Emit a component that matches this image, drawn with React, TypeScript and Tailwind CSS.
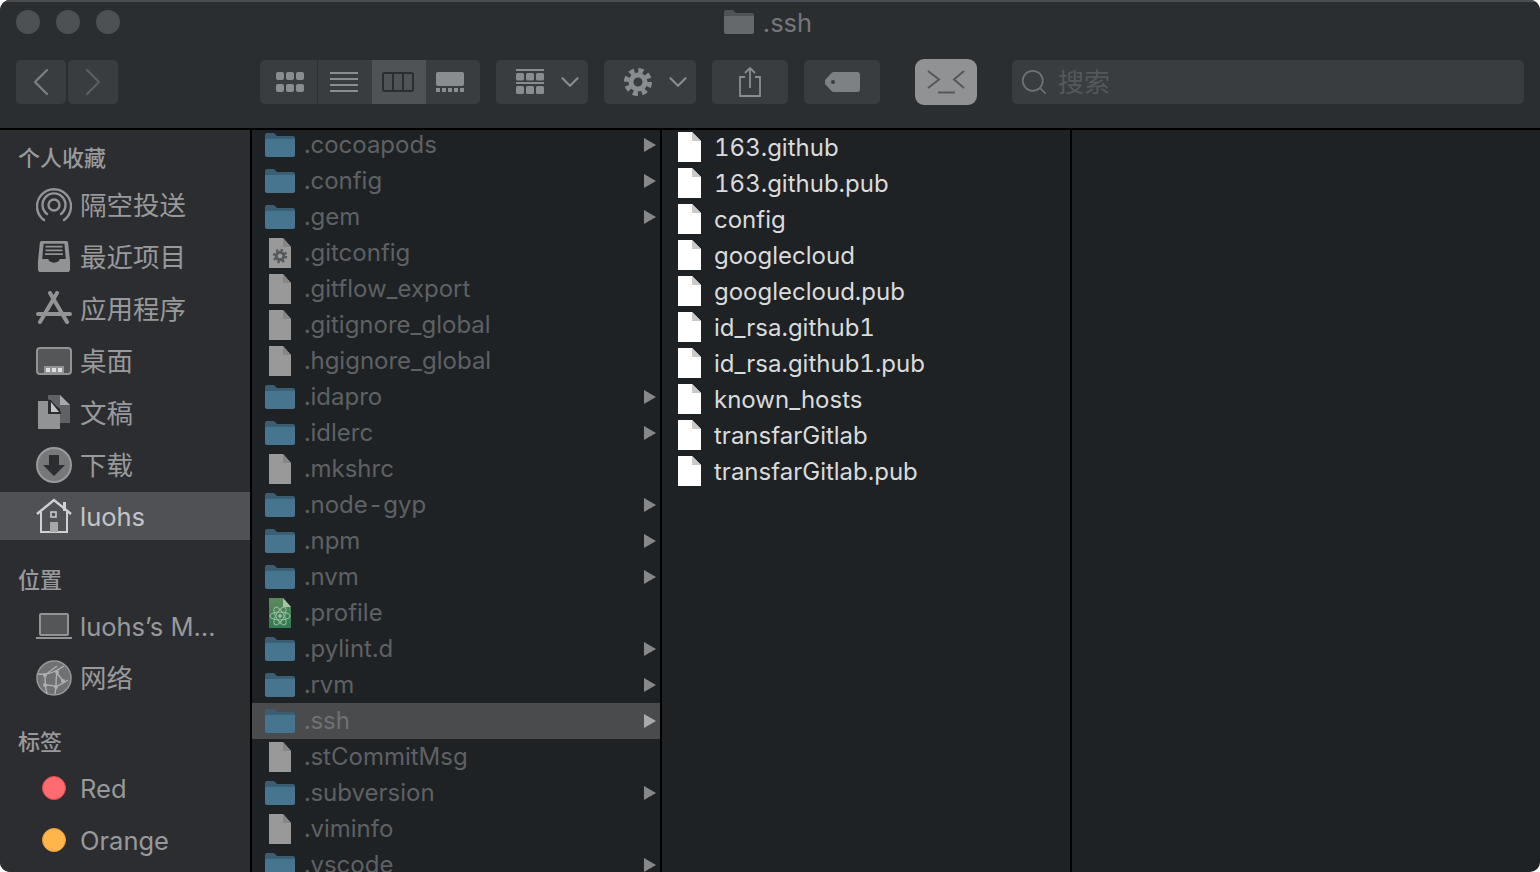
import type { ReactNode } from 'react'
import { ChevronLeft, ChevronRight, ChevronDown, Search } from 'lucide-react'

const FONT = 'font-["Inter","Noto_Sans_CJK_SC",sans-serif]'

type IconKind = 'folder' | 'file' | 'gear' | 'atom'

const dotfiles: { name: string; icon: IconKind; arrow?: boolean }[] = [
  { name: '.cocoapods', icon: 'folder', arrow: true },
  { name: '.config', icon: 'folder', arrow: true },
  { name: '.gem', icon: 'folder', arrow: true },
  { name: '.gitconfig', icon: 'gear' },
  { name: '.gitflow_export', icon: 'file' },
  { name: '.gitignore_global', icon: 'file' },
  { name: '.hgignore_global', icon: 'file' },
  { name: '.idapro', icon: 'folder', arrow: true },
  { name: '.idlerc', icon: 'folder', arrow: true },
  { name: '.mkshrc', icon: 'file' },
  { name: '.node-gyp', icon: 'folder', arrow: true },
  { name: '.npm', icon: 'folder', arrow: true },
  { name: '.nvm', icon: 'folder', arrow: true },
  { name: '.profile', icon: 'atom' },
  { name: '.pylint.d', icon: 'folder', arrow: true },
  { name: '.rvm', icon: 'folder', arrow: true },
  { name: '.ssh', icon: 'folder', arrow: true },
  { name: '.stCommitMsg', icon: 'file' },
  { name: '.subversion', icon: 'folder', arrow: true },
  { name: '.viminfo', icon: 'file' },
  { name: '.vscode', icon: 'folder', arrow: true },
]

const sshFiles = [
  '163.github',
  '163.github.pub',
  'config',
  'googlecloud',
  'googlecloud.pub',
  'id_rsa.github1',
  'id_rsa.github1.pub',
  'known_hosts',
  'transfarGitlab',
  'transfarGitlab.pub',
]

const FILE_PATH = 'M1 0H15L23 9V30H1Z'

function FolderIcon() {
  return (
    <svg width="30" height="24" viewBox="0 0 30 24">
      <path d="M0 2a2 2 0 0 1 2-2h7l3 3h16a2 2 0 0 1 2 2v3H0Z" fill="#3a5f74" />
      <path d="M0 6h30v16a2 2 0 0 1-2 2H2a2 2 0 0 1-2-2Z" fill="#47748f" />
    </svg>
  )
}

function DotfileIcon({ kind }: { kind: IconKind }) {
  if (kind === 'folder') return <FolderIcon />
  return (
    <svg width="30" height="30" viewBox="-3 0 30 30">
      <defs>
        <linearGradient id="atomfill" x1="0" y1="0" x2="0" y2="1">
          <stop offset="0" stopColor="#5d8a5c" />
          <stop offset="1" stopColor="#2f7a52" />
        </linearGradient>
      </defs>
      <path d={FILE_PATH} fill={kind === 'atom' ? 'url(#atomfill)' : '#999999'} />
      <path d="M15 0L23 9H15Z" fill={kind === 'atom' ? '#a9c2a4' : '#868686'} />
      {kind === 'gear' && (
        <g fill="none" stroke="#55595d">
          <circle cx="12" cy="18" r="3.800" strokeWidth="3" />
          <circle cx="12" cy="18" r="6" strokeWidth="2.500" strokeDasharray="2.300 2.400" />
        </g>
      )}
      {kind === 'atom' && (
        <g fill="none" stroke="#9dbfa5" strokeWidth="1">
          <ellipse cx="12" cy="18" rx="10" ry="4" />
          <ellipse cx="12" cy="18" rx="10" ry="4" transform="rotate(60 12 18)" />
          <ellipse cx="12" cy="18" rx="10" ry="4" transform="rotate(120 12 18)" />
          <circle cx="12" cy="18" r="1.400" fill="#9dbfa5" />
        </g>
      )}
    </svg>
  )
}

function ToolButton({ className = '', children }: { className?: string; children: ReactNode }) {
  return (
    <div className={`h-11 flex items-center justify-center rounded-[5px] bg-[#3a3d40] ${className}`}>
      {children}
    </div>
  )
}

function SidebarHeader({ label, className = '' }: { label: string; className?: string }) {
  return (
    <div className={`h-7 pl-[18px] flex items-center text-[22px] font-medium text-[#98999b] ${className}`}>
      {label}
    </div>
  )
}

function SidebarRow({ icon, label, active, latin }: { icon: ReactNode; label: string; active?: boolean; latin?: boolean }) {
  return (
    <div
      className={`${active ? 'h-12 mt-px mb-[3px] bg-[#505154] text-[#c4c5c7]' : 'h-[52px] text-[#98999b]'} ${latin ? 'text-[25.500px]' : 'text-[26.500px]'} flex items-center whitespace-nowrap`}
    >
      <div className="w-[36px] ml-[36px] mr-2 flex justify-center">{icon}</div>
      <span className="pt-0.5">{label}</span>
    </div>
  )
}

const airdrop = (
  <svg width="36" height="36" viewBox="0 0 36 36" fill="none" stroke="#929395" strokeWidth="2.400" strokeLinecap="round">
    <path d="M8 33A17 17 0 1 1 28 33" />
    <path d="M11 27A11.500 11.500 0 1 1 25 27" />
    <circle cx="18" cy="18" r="5.500" />
  </svg>
)

const recents = (
  <svg width="34" height="34" viewBox="0 0 36 36">
    <path d="M5 1h26a2 2 0 0 1 2 2l2 20v8a3 3 0 0 1-3 3H4a3 3 0 0 1-3-3v-8L3 3a2 2 0 0 1 2-2Z" fill="#929395" />
    <path d="M7 4h22l1.500 16H24a6 4 0 0 1-12 0H5.500Z" fill="#2c2d31" />
    <path d="M9 7h18M9 11h18M8.500 15h19" stroke="#929395" strokeWidth="2" />
  </svg>
)

const apps = (
  <svg width="36" height="36" viewBox="0 0 36 36" fill="none" stroke="#929395" strokeLinecap="round">
    <path d="M2 23H34" strokeWidth="4" />
    <path d="M14 2L31 31M21 2L4 31" strokeWidth="4" />
  </svg>
)

const desktop = (
  <svg width="36" height="28" viewBox="0 0 36 28">
    <rect x="1" y="1" width="34" height="26" rx="3" fill="#555658" stroke="#929395" strokeWidth="2" />
    <rect x="8" y="19" width="20" height="8" fill="#929395" />
    <path d="M10 21h4v4h-4ZM16 21h4v4h-4ZM22 21h4v4h-4Z" fill="#e0e0e0" />
  </svg>
)

const documents = (
  <svg width="36" height="36" viewBox="0 0 36 36">
    <path d="M12 0h12l10 10v18h-10V14L12 4Z" fill="#606164" />
    <path d="M24 0l10 10H24Z" fill="#a9a9ab" />
    <path d="M2 6h12l10 11v17H2Z" fill="#929395" />
    <path d="M12 5h3l10 12v2H12Z" fill="#2c2d31" />
    <path d="M15 7l8 10h-8Z" fill="#c4c4c6" />
  </svg>
)

const downloads = (
  <svg width="36" height="36" viewBox="0 0 36 36">
    <circle cx="18" cy="18" r="17" fill="#77787a" stroke="#9a9b9d" strokeWidth="2" />
    <path d="M13 8h10v10h6L18 29 7 18h6Z" fill="#2c2d31" />
  </svg>
)

const home = (
  <svg width="36" height="36" viewBox="0 0 36 36">
    <path d="M1 16L18 2l17 14" fill="none" stroke="#d0d0d2" strokeWidth="2.500" />
    <path d="M5 14v20h26V14" fill="none" stroke="#d0d0d2" strokeWidth="2" />
    <path d="M27 4h3v9h-3Z" fill="#d0d0d2" />
    <rect x="15" y="14" width="5" height="5" fill="none" stroke="#d0d0d2" strokeWidth="1.500" />
    <rect x="14" y="24" width="8" height="10" fill="#a6a7a9" />
  </svg>
)

const laptop = (
  <svg width="36" height="26" viewBox="0 0 36 26">
    <rect x="4" y="1" width="28" height="21" rx="1" fill="#555658" stroke="#929395" strokeWidth="2" />
    <path d="M0 24h36v2H0Z" fill="#929395" />
  </svg>
)

const network = (
  <svg width="36" height="36" viewBox="0 0 36 36">
    <circle cx="18" cy="18" r="17" fill="#707173" stroke="#98999b" strokeWidth="1.500" />
    <g fill="none" stroke="#aeafb1" strokeWidth="1.400">
      <path d="M2 14c6 1 16-1 26-8M9 15c0 6 0 12 2 19M9 15L21 6M9 25c4 0 8 0 11 2 3-2 8-4 12-7M20 27l-1 7M21 13l6 8M21 13c-1 5-1 9-1 14" />
    </g>
    <g fill="#aeafb1">
      <circle cx="9" cy="15" r="2" />
      <circle cx="21" cy="12" r="2" />
      <circle cx="9" cy="25" r="2" />
      <circle cx="20" cy="27" r="2" />
      <circle cx="27" cy="21" r="2" />
    </g>
  </svg>
)

function TagDot({ fill, ring }: { fill: string; ring: string }) {
  return <span className={`w-6 h-6 rounded-full border ${fill} ${ring}`} />
}

export default function App() {
  return (
    <div className={`w-[1540px] h-[872px] bg-white overflow-hidden ${FONT}`}>
      <div className="w-full h-full rounded-[10px] overflow-hidden flex flex-col bg-[#1f2225]">
        {/* title bar */}
        <header className="h-[130px] shrink-0 bg-[#2b2e31] border-t-2 border-t-[#4b4e50] border-b-2 border-b-black">
          <div className="h-10 grid grid-cols-[1fr_auto_1fr] items-center">
            <div className="flex gap-4 pl-4">
              <span className="w-6 h-6 rounded-full bg-[#4d5153]" />
              <span className="w-6 h-6 rounded-full bg-[#4d5153]" />
              <span className="w-6 h-6 rounded-full bg-[#4d5153]" />
            </div>
            <div className="flex items-center gap-[9px] text-[25.500px] text-[#74777a] pr-[4px]">
              <svg width="30" height="24" viewBox="0 0 30 24">
                <path d="M0 2a2 2 0 0 1 2-2h7l3 3h16a2 2 0 0 1 2 2v3H0Z" fill="#505356" />
                <path d="M0 6h30v16a2 2 0 0 1-2 2H2a2 2 0 0 1-2-2Z" fill="#66696c" />
              </svg>
              <span className="pt-0.5">.ssh</span>
            </div>
            <div />
          </div>

          {/* toolbar */}
          <div className="h-12 mt-4 pl-4 pr-4 flex items-center">
            <ToolButton className="w-[50px]">
              <ChevronLeft size={48} strokeWidth={1.100} className="shrink-0 text-[#7d8083]" />
            </ToolButton>
            <ToolButton className="w-[50px] ml-0.5">
              <ChevronRight size={48} strokeWidth={1.100} className="shrink-0 text-[#5c5f62]" />
            </ToolButton>

            <div className="w-[220px] h-11 ml-[142px] flex rounded-[5px] overflow-hidden bg-[#3a3d40]">
              <div className="w-[58px] pl-4 flex items-center border-r border-[#2d3033]">
                <svg width="28" height="20" viewBox="0 0 28 20" fill="#8a8d8f">
                  <rect x="0" y="0" width="8" height="8" rx="2" />
                  <rect x="10" y="0" width="8" height="8" rx="2" />
                  <rect x="20" y="0" width="8" height="8" rx="2" />
                  <rect x="0" y="12" width="8" height="8" rx="2" />
                  <rect x="10" y="12" width="8" height="8" rx="2" />
                  <rect x="20" y="12" width="8" height="8" rx="2" />
                </svg>
              </div>
              <div className="w-[54px] pr-0.5 flex items-center justify-center">
                <svg width="28" height="20" viewBox="0 0 28 20" stroke="#8a8d8f" strokeWidth="2">
                  <path d="M0 1h28M0 7h28M0 13h28M0 19h28" />
                </svg>
              </div>
              <div className="w-[54px] pr-0.5 flex items-center justify-center bg-[#505356]">
                <svg width="32" height="20" viewBox="0 0 32 20" fill="none" stroke="#2b2e31" strokeWidth="2">
                  <rect x="1" y="1" width="30" height="18" rx="1.500" />
                  <path d="M11 1v18M21 1v18" />
                </svg>
              </div>
              <div className="flex-1 pl-[10px] flex items-center">
                <svg width="28" height="20" viewBox="0 0 28 20" fill="#8a8d8f">
                  <rect x="0" y="0" width="28" height="14" rx="2" />
                  <path d="M0 16h4v4H0ZM6 16h4v4H6ZM12 16h4v4h-4ZM18 16h4v4h-4ZM24 16h4v4h-4Z" />
                </svg>
              </div>
            </div>

            <ToolButton className="w-[92px] ml-4 pl-5 !justify-start">
              <svg width="28" height="26" viewBox="0 0 28 26" fill="#8a8d8f" className="shrink-0">
                <path d="M0 0h28v2H0ZM0 13h28v2H0Z" />
                <rect x="0" y="4" width="8" height="7.500" rx="1.500" />
                <rect x="10" y="4" width="8" height="7.500" rx="1.500" />
                <rect x="20" y="4" width="8" height="7.500" rx="1.500" />
                <rect x="0" y="17" width="8" height="8" rx="1.500" />
                <rect x="10" y="17" width="8" height="8" rx="1.500" />
                <rect x="20" y="17" width="8" height="8" rx="1.500" />
              </svg>
              <ChevronDown size={30} strokeWidth={1.700} className="shrink-0 ml-[11px] text-[#8a8d8f]" />
            </ToolButton>
            <ToolButton className="w-[92px] ml-4 pl-5 !justify-start">
              <svg width="28" height="28" viewBox="0 0 28 28" fill="none" stroke="#8a8d8f" className="shrink-0">
                <circle cx="14" cy="14" r="7" strokeWidth="5" />
                <circle cx="14" cy="14" r="11.500" strokeWidth="5" strokeDasharray="5 4.030" />
              </svg>
              <ChevronDown size={30} strokeWidth={1.700} className="shrink-0 ml-[11px] text-[#8a8d8f]" />
            </ToolButton>
            <ToolButton className="w-[76px] ml-4">
              <svg width="24" height="30" viewBox="0 0 24 30" fill="none" stroke="#8a8d8f" strokeWidth="1.800">
                <path d="M7 10H2v19h20V10h-5" />
                <path d="M12 21V1M7 6l5-5 5 5" />
              </svg>
            </ToolButton>
            <ToolButton className="w-[76px] ml-4">
              <svg width="35" height="20" viewBox="0 0 35 20">
                <path d="M9 0h23a3 3 0 0 1 3 3v14a3 3 0 0 1-3 3H9a4 4 0 0 1-2.500-1L0 12a3 3 0 0 1 0-4l6.500-7A4 4 0 0 1 9 0Z" fill="#7e8184" />
                <circle cx="8" cy="10" r="2" fill="#3a3d40" />
              </svg>
            </ToolButton>

            <div className="w-[62px] h-[46px] ml-[35px] flex items-center justify-center rounded-[9px] bg-[#909294]">
              <svg width="38" height="24" viewBox="0 0 38 24" fill="none" stroke="#55585b" strokeWidth="2">
                <path d="M1 1l11 8.500L1 18M37 1L27 9.500 37 18M11 22.500h17" />
              </svg>
            </div>

            <div className="flex-1 h-11 ml-[35px] pl-[7px] flex items-center gap-[9px] rounded-[5px] bg-[#3a3d40] text-[26px] text-[#55585b]">
              <Search size={30} strokeWidth={1.400} className="text-[#6e7174]" />
              搜索
            </div>
          </div>
        </header>

        <div className="flex-1 min-h-0 flex">
          {/* sidebar */}
          <aside className="w-[250px] shrink-0 bg-[#2c2d31] overflow-hidden pt-[14px]">
            <SidebarHeader label="个人收藏" />
            <div className="mt-[7px]">
              <SidebarRow icon={airdrop} label="隔空投送" />
              <SidebarRow icon={recents} label="最近项目" />
              <SidebarRow icon={apps} label="应用程序" />
              <SidebarRow icon={desktop} label="桌面" />
              <SidebarRow icon={documents} label="文稿" />
              <SidebarRow icon={downloads} label="下载" />
              <SidebarRow icon={home} label="luohs" latin active />
            </div>
            <SidebarHeader label="位置" className="mt-[26px]" />
            <div className="mt-1.5">
              <SidebarRow icon={laptop} label="luohs’s M…" latin />
              <SidebarRow icon={network} label="网络" />
            </div>
            <SidebarHeader label="标签" className="mt-6" />
            <div className="mt-1.5">
              <SidebarRow icon={<TagDot fill="bg-[#ff6b6e]" ring="border-[#e2484c]" />} label="Red" latin />
              <SidebarRow icon={<TagDot fill="bg-[#ffb54c]" ring="border-[#eb9c2e]" />} label="Orange" latin />
            </div>
          </aside>

          {/* dotfiles column */}
          <section className="w-[410px] shrink-0 border-l-2 border-black overflow-hidden">
            <div className="-mt-[3px]">
              {dotfiles.map((item) => (
                <div
                  key={item.name}
                  className={`h-9 pl-[13px] pr-[4px] flex items-center text-[24px] tabular-nums ${item.name === '.ssh' ? 'bg-[#4a4b4d] text-[#6f7173]' : 'text-[#5e6164]'}`}
                >
                  <div className="w-[30px] mr-[9px] flex justify-center">
                    <DotfileIcon kind={item.icon} />
                  </div>
                  <span className="flex-1">{item.name}</span>
                  {item.arrow && (
                    <svg width="12" height="14" viewBox="0 0 12 14">
                      <path d="M0 0L12 7L0 14Z" fill={item.name === '.ssh' ? '#a9aaac' : '#86888a'} />
                    </svg>
                  )}
                </div>
              ))}
            </div>
          </section>

          {/* .ssh column */}
          <section className="w-[410px] shrink-0 border-l-2 border-black overflow-hidden">
            <div className="-mt-px">
              {sshFiles.map((name) => (
                <div key={name} className="h-9 pl-[16px] flex items-center gap-[13px] text-[24px] tabular-nums text-[#dadbdc]">
                  <svg width="23" height="30" viewBox="0 0 23 30" className="shrink-0">
                    <path d="M0 0H14L23 9V30H0Z" fill="#ffffff" />
                    <path d="M14 0L23 9H14Z" fill="#c9c9c9" />
                  </svg>
                  <span className="pt-[2px]">{name}</span>
                </div>
              ))}
            </div>
          </section>

          <section className="flex-1 border-l-2 border-black" />
        </div>
      </div>
    </div>
  )
}
